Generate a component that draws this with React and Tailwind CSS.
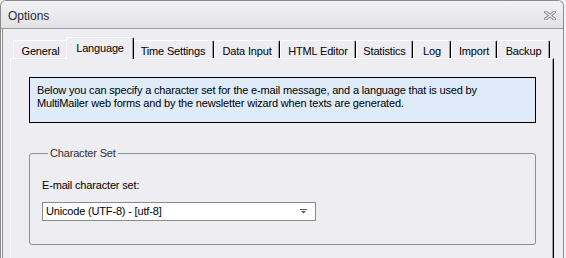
import React from "react";

const tabs = [
  { label: "General", w: 55 },
  { label: "Language", w: 68, selected: true },
  { label: "Time Settings", w: 82 },
  { label: "Data Input", w: 66 },
  { label: "HTML Editor", w: 76 },
  { label: "Statistics", w: 57 },
  { label: "Log", w: 38 },
  { label: "Import", w: 46 },
  { label: "Backup", w: 53 },
];

function CloseIcon() {
  return (
    <svg width="12" height="9" viewBox="0 0 12 9">
      <path d="M1.5 1 L10.5 8 M10.5 1 L1.5 8" stroke="#8d8d8d" strokeWidth="3.2" strokeLinecap="square" fill="none" />
      <path d="M1.5 1 L10.5 8 M10.5 1 L1.5 8" stroke="#f2f2f2" strokeWidth="1.2" strokeLinecap="square" fill="none" />
    </svg>
  );
}

function Tab({ label, w, selected }) {
  if (selected) {
    return (
      <div
        style={{ width: w }}
        className="relative z-10 -mx-[2px] -mb-[1px] h-[22px] shrink-0 bg-[#eeedf2] border-t border-l border-r border-t-white border-l-white border-r-black rounded-t-[2px] shadow-[inset_-1px_0_0_#a0a0a0] flex justify-center pt-[4px] leading-[13px]"
      >
        {label}
      </div>
    );
  }
  return (
    <div
      style={{ width: w }}
      className="h-[18px] shrink-0 border-t border-l border-r border-t-white border-l-white border-r-black rounded-t-[2px] shadow-[inset_-1px_0_0_#a0a0a0] flex justify-center pt-[4px] leading-[13px]"
    >
      {label}
    </div>
  );
}

export default function App() {
  return (
    <div
      className="w-[566px] h-[258px] overflow-hidden bg-[#f4f4f6] text-[11px] tracking-[-0.17px] text-black"
      style={{ fontFamily: '"Liberation Sans", Arial, sans-serif' }}
    >
      <div className="w-[564px] h-[258px] flex flex-col border-l border-r border-t border-[#8a8a8a] rounded-t-[6px] overflow-hidden">
        {/* Title bar */}
        <div className="h-[28px] shrink-0 flex items-center justify-between pl-[7px] pr-[7px] bg-gradient-to-b from-[#f2f2f4] to-[#e2e2e6] border-b border-[#9a9a9e]">
          <span className="text-[12px] tracking-normal text-[#2a2a35] pt-[2px]">Options</span>
          <span className="pt-[2px]">
            <CloseIcon />
          </span>
        </div>
        {/* Body */}
        <div className="flex-1 flex flex-col bg-[#eeedf2] shadow-[inset_1px_0_0_#f8f8f8,inset_2px_0_0_#8c8c8c] pl-[9px] pt-[8px]">
          <div className="w-[544px] flex flex-col">
            {/* Tab row */}
            <div className="h-[21px] flex items-end pl-[3px]">
              {tabs.map((t) => (
                <Tab key={t.label} {...t} />
              ))}
            </div>
            {/* Panel */}
            <div className="h-[220px] border-t border-l border-r border-t-white border-l-white border-r-black shadow-[inset_-1px_0_0_#a0a0a0] pl-[18px] pt-[18px]">
              <div className="w-[507px] h-[46px] border border-black bg-[#dfebf9] pl-[7px] pt-[6px] leading-[13px]">
                Below you can specify a character set for the e-mail message, and a language that is used by
                <br />
                MultiMailer web forms and by the newsletter wizard when texts are generated.
              </div>
              <fieldset className="mt-[24px] w-[507px] h-[98px] border border-[#8e8f93] rounded-[3px] pl-[12px]">
                <legend className="ml-[6px] px-[2px] leading-[13px] text-[#303030]">Character Set</legend>
                <div className="mt-[19px] leading-[13px]">E-mail character set:</div>
                <div className="mt-[10px] w-[274px] h-[19px] border border-[#8a8a8e] bg-white flex items-center justify-between pl-[3px] pr-[8px]">
                  <span className="leading-[13px]">Unicode (UTF-8) - [utf-8]</span>
                  <svg width="7" height="5" viewBox="0 0 7 5">
                    <rect x="0" y="0" width="7" height="1" fill="#555" />
                    <path d="M1 2 H6 L3.5 4.5 Z" fill="#555" />
                  </svg>
                </div>
              </fieldset>
            </div>
          </div>
        </div>
      </div>
    </div>
  );
}
